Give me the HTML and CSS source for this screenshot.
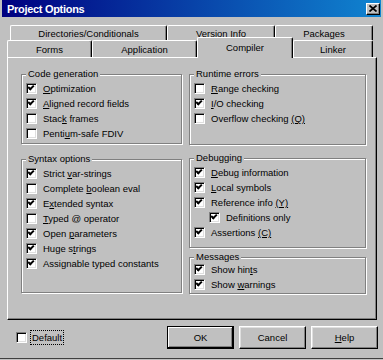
FILE: index.html
```html
<!DOCTYPE html>
<html lang="en">
<head>
  <meta charset="UTF-8">
  <title>Project Options</title>
  <link rel="stylesheet" href="styles.css">
</head>
<body>
  <div class="dialog">
    <div class="titlebar">
      <span class="title">Project Options</span>
      <span class="close-btn">
        <svg width="8" height="7" viewBox="0 0 8 7"><path d="M0.5 0.5 L7.5 6.5 M7.5 0.5 L0.5 6.5" stroke="#000" stroke-width="1.7"/></svg>
      </span>
    </div>

    <div class="tabsheet">
      <div class="tab-row back-row">
        <div class="tab tab-dirs">Directories/Conditionals</div>
        <div class="tab tab-version">Version Info</div>
        <div class="tab tab-packages">Packages</div>
      </div>
      <div class="tab-row front-row">
        <div class="tab tab-forms">Forms</div>
        <div class="tab tab-app">Application</div>
        <div class="tab tab-compiler active">Compiler</div>
        <div class="tab tab-linker">Linker</div>
      </div>

      <div class="panel">
        <div class="column">
          <fieldset class="group group-codegen">
            <legend>Code generation</legend>
            <label class="check"><span class="box checked"></span><span><u>O</u>ptimization</span></label>
            <label class="check"><span class="box checked"></span><span><u>A</u>ligned record fields</span></label>
            <label class="check"><span class="box"></span><span>Stac<u>k</u> frames</span></label>
            <label class="check"><span class="box"></span><span>Penti<u>u</u>m-safe FDIV</span></label>
          </fieldset>
          <fieldset class="group group-syntax">
            <legend>Syntax options</legend>
            <label class="check"><span class="box checked"></span><span>Strict <u>v</u>ar-strings</span></label>
            <label class="check"><span class="box"></span><span>Complete <u>b</u>oolean eval</span></label>
            <label class="check"><span class="box checked"></span><span>E<u>x</u>tended syntax</span></label>
            <label class="check"><span class="box"></span><span><u>T</u>yped @ operator</span></label>
            <label class="check"><span class="box checked"></span><span>Open <u>p</u>arameters</span></label>
            <label class="check"><span class="box checked"></span><span>Huge s<u>t</u>rings</span></label>
            <label class="check"><span class="box checked"></span><span>Assignable typed constants</span></label>
          </fieldset>
        </div>
        <div class="column">
          <fieldset class="group group-runtime">
            <legend>Runtime errors</legend>
            <label class="check"><span class="box"></span><span><u>R</u>ange checking</span></label>
            <label class="check"><span class="box checked"></span><span><u>I</u>/O checking</span></label>
            <label class="check"><span class="box"></span><span>Overflow checking <u>(Q)</u></span></label>
          </fieldset>
          <fieldset class="group group-debug">
            <legend>Debugging</legend>
            <label class="check"><span class="box checked"></span><span><u>D</u>ebug information</span></label>
            <label class="check"><span class="box checked"></span><span><u>L</u>ocal symbols</span></label>
            <label class="check"><span class="box checked"></span><span>Reference info <u>(Y)</u></span></label>
            <label class="check indent"><span class="box checked"></span><span>Definitions only</span></label>
            <label class="check"><span class="box checked"></span><span>Assertions <u>(C)</u></span></label>
          </fieldset>
          <fieldset class="group group-messages">
            <legend>Messages</legend>
            <label class="check"><span class="box checked"></span><span>Show hin<u>t</u>s</span></label>
            <label class="check"><span class="box checked"></span><span>Show <u>w</u>arnings</span></label>
          </fieldset>
        </div>
      </div>
    </div>

    <div class="footer">
      <label class="check default-check"><span class="box"></span><span class="focus">Default</span></label>
      <div class="buttons">
        <button class="btn btn-default">OK</button>
        <button class="btn">Cancel</button>
        <button class="btn"><u>H</u>elp</button>
      </div>
    </div>
  </div>
</body>
</html>
```

FILE: styles.css
```css
body {
  margin: 0;
  background: #c0c0c0;
  font-family: "Liberation Sans", Arial, sans-serif;
  font-size: 9.5px;
  color: #000;
}
.dialog {
  width: 383px;
  height: 359px;
  box-sizing: border-box;
  padding: 0 2px;
  border-bottom: 1px solid #404040;
}
.titlebar {
  height: 17px;
  background: linear-gradient(to right, #000080, #1084d0);
  display: flex;
  align-items: center;
  justify-content: space-between;
  padding: 0 1px 0 5px;
}
.title {
  color: #fff;
  font-weight: bold;
  font-size: 11px;
  letter-spacing: -0.3px;
}
.close-btn {
  width: 14px;
  height: 12px;
  box-sizing: border-box;
  background: #c0c0c0;
  border: 1px solid;
  border-color: #fff #000 #000 #fff;
  box-shadow: inset -1px -1px 0 #808080;
  display: flex;
  align-items: center;
  justify-content: center;
}

/* tabs */
.tabsheet {
  margin: 8px 4px 0 5px;
}
.tab-row {
  display: flex;
}
.back-row {
  padding-left: 3px;
  height: 15px;
}
.front-row {
  height: 17px;
}
.tab {
  box-sizing: border-box;
  background: #c0c0c0;
  border-top: 1px solid #fff;
  border-left: 1px solid #fff;
  border-right: 1px solid #000;
  box-shadow: inset -1px 0 0 #808080;
  border-radius: 2px 2px 0 0;
  display: flex;
  align-items: center;
  justify-content: center;
  white-space: nowrap;
}
.tab-dirs { width: 157px; }
.tab-version { width: 108px; }
.tab-packages { width: 98px; }
.tab-forms { width: 85px; }
.tab-app { width: 105px; }
.tab-compiler { width: 96px; }
.tab-linker { width: 80px; }
.tab.active {
  height: 21px;
  margin-top: -3px;
  position: relative;
  z-index: 1;
  padding-bottom: 2px;
}

/* page */
.panel {
  height: 263px;
  box-sizing: border-box;
  border: 1px solid;
  border-color: #fff #000 #000 #fff;
  box-shadow: inset -1px -1px 0 #808080;
  display: grid;
  grid-template-columns: 161px 177px;
  column-gap: 7px;
  align-items: start;
  padding: 11px 0 0 13px;
}
.column {
  display: flex;
  flex-direction: column;
}
.group {
  margin: 0;
  padding: 2px 0 0 4px;
  border: 1px solid #808080;
  box-shadow: 1px 1px 0 #fff, inset 1px 1px 0 #fff;
  box-sizing: border-box;
  min-width: 0;
}
.group legend {
  padding: 0 2px;
  line-height: 10px;
  background: #c0c0c0;
}
.group-codegen { height: 75px; }
.group-syntax { height: 139px; margin-top: 10px; }
.group-runtime { height: 76px; }
.group-debug { height: 95px; margin-top: 8px; }
.group-messages { height: 42px; margin-top: 4px; padding-top: 0; }

.check {
  display: flex;
  align-items: center;
  height: 15px;
  white-space: nowrap;
}
.check.indent {
  padding-left: 15px;
}
.box {
  width: 11px;
  height: 11px;
  box-sizing: border-box;
  flex: none;
  position: relative;
  margin-right: 6px;
  background: #fff;
  border: 1px solid;
  border-color: #808080 #fff #fff #808080;
  box-shadow: inset 1px 1px 0 #000, inset -1px -1px 0 #dfdfdf;
}
.box.checked::after {
  content: "";
  position: absolute;
  left: 1px;
  top: 1px;
  width: 4px;
  height: 2px;
  border-left: 2px solid #000;
  border-bottom: 2px solid #000;
  transform: rotate(-45deg);
}

/* bottom row */
.footer {
  display: flex;
  align-items: center;
  margin-top: 6px;
  padding: 0 3px 0 14px;
}
.default-check .box {
  margin-right: 4px;
}
.focus {
  outline: 1px dotted #000;
  padding: 1px 1px;
  line-height: 11px;
}
.buttons {
  margin-left: auto;
  display: flex;
  gap: 5px;
}
.btn {
  width: 67px;
  height: 23px;
  box-sizing: border-box;
  padding: 0;
  font: inherit;
  color: #000;
  background: #c0c0c0;
  border: 1px solid;
  border-color: #fff #000 #000 #fff;
  box-shadow: inset -1px -1px 0 #808080, inset 1px 1px 0 #dfdfdf;
}
.btn-default {
  border-color: #000;
  box-shadow: inset -1px -1px 0 #000, inset 1px 1px 0 #fff, inset -2px -2px 0 #808080;
}
```
